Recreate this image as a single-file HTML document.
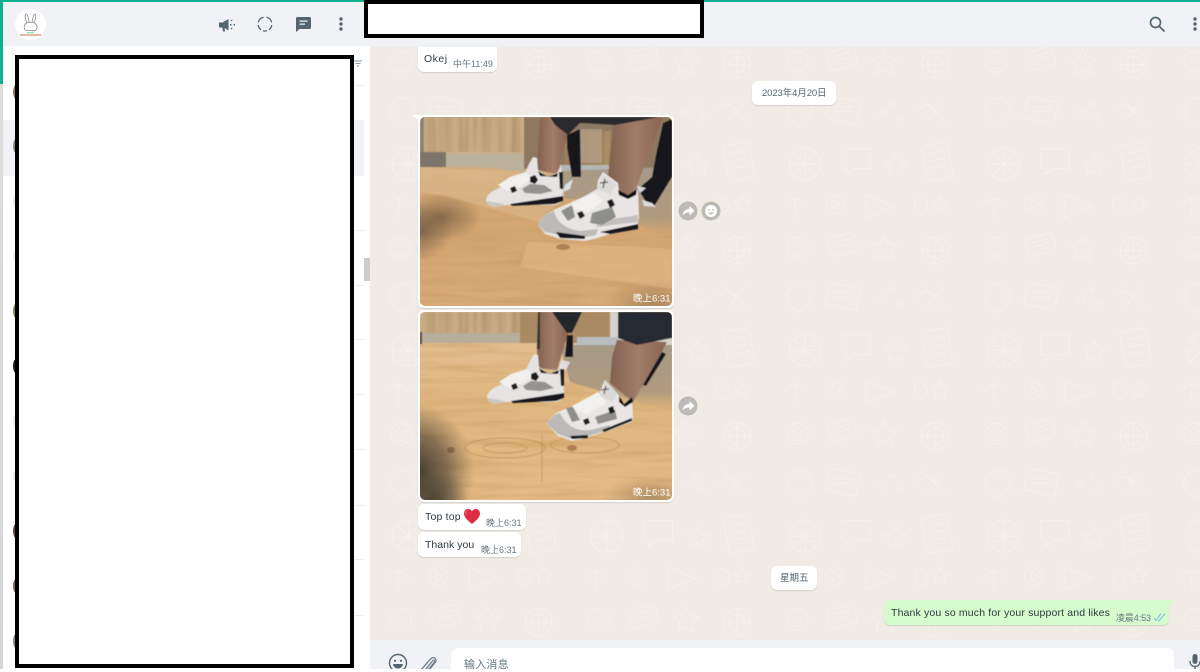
<!DOCTYPE html>
<html><head><meta charset="utf-8">
<style>
*{box-sizing:border-box}
html,body{margin:0;padding:0;width:1200px;height:669px;overflow:hidden;background:#fff;font-family:"Liberation Sans","Noto Sans CJK SC",sans-serif;color:#3b4a54}
.a{position:absolute}
.b{position:absolute;background:#fff;border-radius:6px;box-shadow:0 1px 1px rgba(11,20,26,.12)}
.t{position:absolute;font-size:9px;color:#667781;white-space:nowrap}
.m{position:absolute;font-size:10.5px;color:#2f3a40;white-space:nowrap;letter-spacing:.1px}
.sep{position:absolute;left:354px;width:11px;height:1px;background:#eceef0}
.av{position:absolute;left:13px;width:6px;height:14px;border-radius:50%}
</style></head><body>
<div class="a" style="left:0;top:0;width:3px;height:669px;background:linear-gradient(#dfded9,#d3d7d9)"></div>
<div class="a" style="left:0;top:0;width:3px;height:84px;background:#0fb08e"></div>
<div class="a" style="left:3px;top:2px;width:367px;height:667px;background:#fff"></div>
<div class="a" style="left:3px;top:2px;width:367px;height:44px;background:#f0f2f5"></div>
<div class="a" style="left:3px;top:120px;width:361px;height:56px;background:#f0f2f5"></div>
<div class="a" style="left:364px;top:258px;width:6px;height:23px;background:#ccc"></div>
<div class="sep" style="top:85px;left:3px;width:362px"></div>
<div class="sep" style="top:230px"></div><div class="sep" style="top:285px"></div><div class="sep" style="top:339px"></div><div class="sep" style="top:394px"></div><div class="sep" style="top:449px"></div><div class="sep" style="top:505px"></div><div class="sep" style="top:559px"></div><div class="sep" style="top:615px"></div>
<div class="av" style="top:85px;background:#8d7b6d"></div>
<div class="av" style="top:139px;background:#8a8a8a"></div>
<div class="av" style="top:194px;background:#ececec"></div>
<div class="av" style="top:249px;background:#ececec"></div>
<div class="av" style="top:304px;background:#7b8a65"></div>
<div class="av" style="top:359px;background:#222"></div>
<div class="av" style="top:414px;background:#ececec"></div>
<div class="av" style="top:469px;background:#ececec"></div>
<div class="av" style="top:524px;background:#6a4348"></div>
<div class="av" style="top:579px;background:#7e6560"></div>
<div class="av" style="top:634px;background:#888"></div>

<svg class="a" style="left:353px;top:60px" width="10" height="8" viewBox="0 0 10 8"><path d="M1 1h8M2.500 3.500h5M4 6h2" stroke="#8696a0" stroke-width="1"/></svg>

<!-- logo -->
<svg class="a" style="left:15px;top:9px" width="31" height="31" viewBox="0 0 31 31">
<circle cx="15.500" cy="15.500" r="15.500" fill="#fff"/>
<g fill="none" stroke="#888" stroke-width=".8"><path d="M12 14c-2-3-2.500-8-1-9 1.500 0 2.500 4 3 8M17 13c.5-4 2-8 3-8 1.500 1 .5 6-1.500 9"/><path d="M11.500 14c-3 2-3 6-.5 7.500h9.500c2.500-2 2-5.500-1-7.500-2-1-6-1-8 0z"/></g>
<rect x="12" y="23" width="7" height="1.500" fill="#a8dcc0"/><rect x="5" y="25" width="21" height="2" fill="#e0b8a4"/>
</svg>

<!-- sidebar icons -->
<svg class="a" style="left:218px;top:16px" width="18" height="18" viewBox="0 0 18 18" fill="#54656f"><path d="M1 6.500h3.500L10.500 3v11.500L6.500 12l.6 3.500H5l-.8-4H1z"/><path d="M12 8h1.500v1.500H12zM15.500 8h1.500v1.500h-1.500zM12.500 4.500l1.500-1 .6.900-1.500 1zM12.500 12.500l.6-.9 1.500 1-.6.900z"/></svg>
<svg class="a" style="left:257px;top:16px" width="16" height="16" viewBox="0 0 16 16" fill="none" stroke="#54656f" stroke-width="1.300"><path d="M1.300 6.500A6.900 6.900 0 0 1 6.500 1.300M9.500 1.300a6.900 6.900 0 0 1 5.200 5.200M14.800 9a6.900 6.900 0 0 1-2.900 4.700M10 14.700a7 7 0 0 1-4 0M4.100 13.700A6.900 6.900 0 0 1 1.200 9"/></svg>
<svg class="a" style="left:296px;top:17px" width="15" height="15" viewBox="0 0 15 15" fill="#54656f"><path d="M1.500 0h12A1.500 1.500 0 0 1 15 1.500v9a1.500 1.500 0 0 1-1.500 1.500H3.500L0 15V1.500A1.500 1.500 0 0 1 1.500 0z"/><path d="M3.500 3.500h8v1.300h-8zM3.500 6.500h5.500v1.300H3.500z" fill="#f0f2f5"/></svg>
<svg class="a" style="left:338px;top:16px" width="6" height="16" viewBox="0 0 6 16" fill="#54656f"><circle cx="3" cy="3" r="1.700"/><circle cx="3" cy="8" r="1.700"/><circle cx="3" cy="13" r="1.700"/></svg>

<!-- main chat background -->
<div class="a" style="left:370px;top:47px;width:830px;height:593px;background:#f0ebe4;overflow:hidden">
<svg width="830" height="593" style="position:absolute;left:0;top:0">
<defs><pattern id="d" width="320" height="300" patternUnits="userSpaceOnUse" patternTransform="translate(6 -10) scale(.62)">
<g fill="none" stroke="#f5f1eb" stroke-width="1.500">
<circle cx="40" cy="40" r="17"/><path d="M30 36h6M44 36h6M32 48c5 4 11 4 16 0"/>
<rect x="90" y="20" width="44" height="30" rx="4" transform="rotate(-15 110 35)"/><path d="M98 32l26-7M100 39l26-7"/>
<path d="M180 20l6 13 14 2-10 10 3 14-13-7-13 7 3-14-10-10 14-2z"/>
<circle cx="262" cy="44" r="22"/><circle cx="262" cy="44" r="13"/><path d="M262 22v44M240 44h44"/>
<path d="M25 110c10-15 30-15 36 0s-8 28-18 34c-12-6-26-20-18-34z"/>
<rect x="88" y="100" width="50" height="36" rx="3" transform="rotate(12 113 118)"/><path d="M98 112h30M98 120h30"/>
<circle cx="178" cy="122" r="5"/><circle cx="194" cy="108" r="3"/><circle cx="205" cy="130" r="4"/>
<path d="M240 100l40 38M250 134l24-30M232 118c10-10 20-10 30 0"/>
<circle cx="52" cy="205" r="26"/><path d="M52 179v52M26 205h52M34 187l36 36M70 187l-36 36"/>
<path d="M112 180h46v32h-28l-10 10v-10h-8z"/>
<path d="M198 190l6 10 12 2-8 8 2 12-12-6-11 6 2-12-8-8 12-2z"/>
<rect x="244" y="172" width="42" height="58" rx="5" transform="rotate(-10 265 200)"/><path d="M252 188l26-5M254 200l26-5M256 212l26-5"/>
<path d="M20 272c8-14 26-14 32 0M36 258v36"/><circle cx="100" cy="270" r="14"/><path d="M96 262l12 8-12 8z"/>
<path d="M150 255l46 18-46 18z"/><path d="M230 260c12-6 24 6 18 18s-24 6-18-18zM270 256l4 8 9 1-6 6 1 9-8-4-8 4 1-9-6-6 9-1z"/>
</g></pattern></defs>
<rect width="830" height="593" fill="url(#d)"/>
</svg>
</div>

<!-- headers -->
<div class="a" style="left:370px;top:2px;width:830px;height:45px;background:#f0f2f5"></div>
<svg class="a" style="left:1149px;top:16px" width="16" height="16" viewBox="0 0 16 16" fill="none" stroke="#54656f" stroke-width="1.700"><circle cx="6.500" cy="6.500" r="5"/><path d="M10.500 10.500L15.500 15.500"/></svg>
<svg class="a" style="left:1192px;top:16px" width="6" height="16" viewBox="0 0 6 16" fill="#54656f"><circle cx="3" cy="3" r="1.700"/><circle cx="3" cy="8" r="1.700"/><circle cx="3" cy="13" r="1.700"/></svg>

<!-- Okej -->
<div class="b" style="left:418px;top:47px;width:79px;height:25px;border-radius:0 0 6px 6px"></div>
<div class="m" style="left:424px;top:53px;letter-spacing:.5px">Okej</div>
<div class="t" style="left:453px;top:57px">中午11:49</div>

<!-- date -->
<div class="b" style="left:752px;top:81px;width:84px;height:24px"></div>
<div class="t" style="left:762px;top:85px;color:#54656f;font-size:9.500px;letter-spacing:-.1px">2023年4月20日</div>

<!-- image bubbles -->
<div class="b" style="left:418px;top:115px;width:256px;height:193px"></div>
<svg class="a" style="left:412px;top:115px" width="10" height="8"><path d="M0 0h10v8z" fill="#fff"/></svg>
<div class="b" style="left:418px;top:310px;width:256px;height:192px"></div>

<svg class="a" style="left:420px;top:117px;border-radius:5px" width="252" height="189" viewBox="0 0 252 189">
<defs>
<filter id="bl" x="-5%" y="-5%" width="110%" height="110%"><feGaussianBlur stdDeviation=".6"/></filter>
<filter id="gr" x="0" y="0" width="100%" height="100%"><feTurbulence type="fractalNoise" baseFrequency=".012 .16" numOctaves="3" seed="4"/><feColorMatrix values="0 0 0 0 .55 0 0 0 0 .33 0 0 0 0 .14 1.400 0 0 0 -.52"/></filter>
<filter id="vg" x="0" y="0" width="100%" height="100%"><feTurbulence type="fractalNoise" baseFrequency=".13 .008" numOctaves="2" seed="9"/><feColorMatrix values="0 0 0 0 .42 0 0 0 0 .28 0 0 0 0 .14 1.700 0 0 0 -.6"/></filter>
<linearGradient id="fl" x1="0" y1="0" x2="0" y2="1"><stop offset="0" stop-color="#ddbb90"/><stop offset=".5" stop-color="#d3a470"/><stop offset="1" stop-color="#d9ab76"/></linearGradient>
<linearGradient id="fl2" x1="0" y1="0" x2="0" y2="1"><stop offset="0" stop-color="#e4c298"/><stop offset=".5" stop-color="#e0b67f"/><stop offset="1" stop-color="#e6bb85"/></linearGradient>
<linearGradient id="sk" x1="0" y1="0" x2="1" y2="0"><stop offset="0" stop-color="#82604f"/><stop offset=".5" stop-color="#a17c6a"/><stop offset="1" stop-color="#8a6452"/></linearGradient>
<radialGradient id="tg"><stop offset="0" stop-color="#000" stop-opacity=".2"/><stop offset="1" stop-color="#000" stop-opacity="0"/></radialGradient>
<radialGradient id="sh1"><stop offset="0" stop-color="#4d3d2f" stop-opacity=".85"/><stop offset=".6" stop-color="#6a5440" stop-opacity=".45"/><stop offset="1" stop-color="#6a5440" stop-opacity="0"/></radialGradient>
<radialGradient id="sh2"><stop offset="0" stop-color="#2e2a24" stop-opacity=".9"/><stop offset=".55" stop-color="#4a4136" stop-opacity=".6"/><stop offset="1" stop-color="#5a4836" stop-opacity="0"/></radialGradient>
<linearGradient id="gf" x1="0" y1="0" x2="0" y2="1"><stop offset="0" stop-color="#a69a88"/><stop offset=".7" stop-color="#b09a7e"/><stop offset="1" stop-color="#c9a679" stop-opacity="0"/></linearGradient>
<g id="sL">
<path d="M66 84C66 76 76 72 90 66L105 56L109 47L113 40L117 41L118 53L128 60L138 55L141 48L143 70L143 84L136 88L85 88L74 90L68 88Z" fill="#e6e3e2"/>
<path d="M78 68L90 60L106 55L112 62L100 70L88 74Z" fill="#f2f0ef"/>
<path d="M102 72L110 67L124 68L133 74L120 77L105 76Z" fill="#94938f"/>
<path d="M90 87L143 79L143 84L135 87L92 89Z" fill="#17171a"/>
<path d="M118 54L128 60L138 56L137 60L120 59Z" fill="#111"/>
<path d="M139 55L143 55L143 72L140 72Z" fill="#1c1c1e"/>
<path d="M110 60L115 58L118 63L115 67L110 65Z" fill="#1c1c1e"/><path d="M90 71L95 69L97 74L92 76Z" fill="#1c1c1e"/>
<path d="M66 84L85 87L75 90L68 88Z" fill="#c9c7c4"/>
</g>
</defs>
<rect width="252" height="189" fill="url(#fl)"/>
<rect width="252" height="189" filter="url(#gr)"/>
<g filter="url(#bl)">
<path d="M0 84L45 78L100 82L120 100L110 125L0 120Z" fill="#d8ab75" opacity=".25"/>
<path d="M108 125L252 132V172L100 150Z" fill="#e6bf8e" opacity=".45"/>
<ellipse cx="143" cy="130" rx="7" ry="3" fill="#9a6d42" opacity=".7"/>
<ellipse cx="22" cy="100" rx="40" ry="24" fill="url(#sh1)" opacity=".65"/>
<ellipse cx="0" cy="115" rx="32" ry="28" fill="url(#sh1)" opacity=".7"/>
<path d="M0 50L105 56L145 78L118 105L30 80L0 75Z" fill="#dcbb90" opacity=".55"/>
<rect width="104" height="35" fill="#c9ab84"/>
<rect width="104" height="35" filter="url(#vg)"/>
<rect x="0" y="0" width="4" height="50" fill="#8d8478"/>
<rect x="0" y="35" width="26" height="15" fill="#7d746a"/>
<path d="M26 36H105V55L60 50H26Z" fill="#bcb19b"/>
<rect x="104" y="0" width="148" height="52" fill="#8f7860"/>
<rect x="145" y="14" width="50" height="36" fill="#9c7d5a"/>
<rect x="145" y="14" width="50" height="36" filter="url(#vg)"/>
<rect x="160" y="12" width="22" height="34" fill="#b9aa93" opacity=".6"/>
<path d="M140 48H195V54H140Z" fill="#b5b7b6"/>
<path d="M140 54L252 50V122L218 108L190 82L145 82Z" fill="url(#gf)"/>
<path d="M120 0H130L148 17L137 57L117 53Z" fill="url(#sk)"/>
<path d="M147 18L160 12L161 60L152 60L147 30Z" fill="#17181c"/>
<path d="M193 8L243 0L232 30L213 78L200 78L188 60Z" fill="url(#sk)"/>
<path d="M252 2V60L235 88L228 88L218 72L232 60L236 38L243 6Z" fill="#14151a"/>
<path d="M130 0H240L195 8L160 6L148 18L135 8Z" fill="#2a2c2e"/>
<path d="M145 68L153 62L150 72L143 75Z" fill="#dfe0e3"/><path d="M217 69L226 71L220 76ZM222 83L232 86L236 90L224 89Z" fill="#d9dade"/>
<use href="#sL"/>
<path d="M118 108C120 98 135 92 150 86L165 79L177 72L178 63L183 55L198 66L199 74L208 78L218 72L219 100L217 112L190 117L178 121L165 124L140 122L125 117Z" fill="#e8e5e4"/>
<path d="M118 108C120 100 128 96 134 94C136 104 145 112 160 114L178 112L176 118L165 120L140 118L125 115Z" fill="#bdbbb9"/>
<path d="M176 110L218 105L218 98L180 104Z" fill="#c2c0be"/>
<path d="M136 115L165 119L165 122L140 121Z" fill="#17171a"/>
<path d="M180 115L218 107L218 112L190 117Z" fill="#17171a"/>
<path d="M141 94L152 88L155 100L148 104Z" fill="#8e8e8c"/>
<path d="M172 96L192 90L196 100L182 108L170 106Z" fill="#8e8e8c"/>
<path d="M150 86L175 76L183 84L168 96L154 92Z" fill="#f3f1f0"/>
<path d="M157 96L162 94L165 99L160 102Z" fill="#1a1a1c"/><path d="M187 84L192 82L195 88L190 91Z" fill="#1a1a1c"/>
<path d="M183 58L197 68L190 77L177 72Z" fill="#dad9d7"/>
<path d="M185 62L183 71M180 66L188 65" stroke="#333" stroke-width="1.100" fill="none"/>
<path d="M198 73L208 78L217 72L216 78L208 82L199 78Z" fill="#0e0e0e"/>
</g>
<ellipse cx="232" cy="186" rx="50" ry="22" fill="url(#tg)"/>
<text x="213" y="184.500" font-size="9.500" fill="#fff" font-family="'Liberation Sans','Noto Sans CJK SC',sans-serif">晚上6:31</text>
</svg>

<svg class="a" style="left:420px;top:312px;border-radius:5px" width="252" height="188" viewBox="0 0 252 188">
<defs><filter id="gr2" x="0" y="0" width="100%" height="100%"><feTurbulence type="fractalNoise" baseFrequency=".012 .14" numOctaves="3" seed="21"/><feColorMatrix values="0 0 0 0 .6 0 0 0 0 .36 0 0 0 0 .14 1.300 0 0 0 -.5"/></filter></defs>
<rect width="252" height="188" fill="url(#fl2)"/>
<rect width="252" height="188" filter="url(#gr2)"/>
<g filter="url(#bl)">
<g fill="none" stroke="#b98549" stroke-width=".8" opacity=".7"><ellipse cx="85" cy="136" rx="40" ry="10"/><ellipse cx="85" cy="136" rx="22" ry="5"/><ellipse cx="165" cy="133" rx="34" ry="8"/><path d="M122 122v48"/></g>
<ellipse cx="31" cy="138" rx="4" ry="3" fill="#8d5f38" opacity=".7"/><ellipse cx="152" cy="136" rx="5" ry="3" fill="#a06f44" opacity=".75"/>
<ellipse cx="-4" cy="160" rx="58" ry="68" fill="url(#sh2)"/>
<ellipse cx="14" cy="190" rx="34" ry="34" fill="url(#sh2)" opacity=".7"/>
<rect width="125" height="21" fill="#c9ab84"/>
<rect width="125" height="21" filter="url(#vg)"/>
<rect y="21" width="125" height="10" fill="#b8ad9b"/>
<rect x="0" y="20" width="2" height="12" fill="#5a4a34"/>
<rect x="100" y="0" width="152" height="31" fill="#a98a64"/>
<rect x="190" y="0" width="62" height="34" fill="#d6d3cd"/>
<path d="M157 25H200V35H157Z" fill="#b9bdc0"/>
<path d="M140 33L252 33V100L212 88L150 70Z" fill="url(#gf)"/>
<path d="M120 0H132L148 21L137 58L118 56L117 37Z" fill="url(#sk)"/>
<path d="M132 0H162L152 21L147 21Z" fill="#24262a"/>
<path d="M147 23L153 23L153 45L145 45Z" fill="#14151a"/>
<path d="M118 0H120V37H117Z" fill="#3b322b"/>
<path d="M141 48L150 50L146 58L139 56Z" fill="#ddd"/>
<path d="M197 28L247 30L232 58L213 90L190 71L192 45Z" fill="url(#sk)"/>
<path d="M242 40L223 73L226 74L246 42Z" fill="#14151a"/>
<path d="M198 0H252V26L217 33L198 26Z" fill="#262a31"/>
<use href="#sL" x="1" y="2"/>
<path d="M127 112C130 103 140 98 152 95L165 90L178 85L183 72L185 68L198 82L203 92L212 85L213 105L212 110L190 118L165 126L152 129L138 124Z" fill="#e9e6e5"/>
<path d="M127 112C130 105 135 102 140 101C145 112 155 120 170 118L190 113L188 118L165 125L152 127L138 122Z" fill="#bcbab8"/>
<path d="M150 124L168 123L168 126L152 127Z" fill="#17171a"/>
<path d="M182 118L212 106L212 109L184 120Z" fill="#17171a"/>
<path d="M146 96L153 95L160 108L152 110Z" fill="#8e8e8c"/>
<path d="M175 105L195 98L197 107L178 112Z" fill="#8e8e8c"/>
<path d="M152 94L178 80L187 90L168 102L158 100Z" fill="#f3f1f0"/>
<path d="M163 108L168 106L170 111L165 113Z" fill="#1a1a1c"/><path d="M188 96L193 94L195 100L190 102Z" fill="#1a1a1c"/>
<path d="M185 70L198 82L192 90L180 84Z" fill="#dad9d7"/>
<path d="M186 74L184 82M181 78L189 77" stroke="#333" stroke-width="1" fill="none"/>
<path d="M199 84L204 92L212 85L213 90L205 95L199 90Z" fill="#0e0e0e"/>
</g>
<ellipse cx="232" cy="185" rx="50" ry="22" fill="url(#tg)"/>
<text x="213" y="183.500" font-size="9.500" fill="#fff" font-family="'Liberation Sans','Noto Sans CJK SC',sans-serif">晚上6:31</text>
</svg>

<!-- action buttons -->
<svg class="a" style="left:678px;top:201px" width="44" height="20" viewBox="0 0 44 20">
<circle cx="10" cy="10" r="9.500" fill="#bcbab6"/><path d="M4.500 14.500c.5-4 3-6.500 7-6.800V5l5 4.700-5 4.800v-3c-3 0-5 .8-7 3z" fill="#fff"/>
<circle cx="33" cy="10" r="9.500" fill="#bcbab6"/><circle cx="33" cy="10" r="6" fill="#fff"/><circle cx="31" cy="8.800" r=".9" fill="#bcbab6"/><circle cx="35" cy="8.800" r=".9" fill="#bcbab6"/><path d="M30 11.500c1.500 2.300 4.500 2.300 6 0z" fill="#bcbab6"/>
</svg>
<svg class="a" style="left:678px;top:396px" width="20" height="20" viewBox="0 0 20 20">
<circle cx="10" cy="10" r="9.500" fill="#bcbab6"/><path d="M4.500 14.500c.5-4 3-6.500 7-6.800V5l5 4.700-5 4.800v-3c-3 0-5 .8-7 3z" fill="#fff"/>
</svg>

<!-- text bubbles -->
<div class="b" style="left:418px;top:504px;width:108px;height:26px"></div>
<div class="m" style="left:425px;top:511px;letter-spacing:.2px">Top top</div>
<svg class="a" style="left:464px;top:509px" width="16" height="15" viewBox="0 0 16 15"><path d="M8 15C3 11 0 8 0 4.500 0 1.500 2.200 0 4.200 0 6 0 7.300 1 8 2.300 8.700 1 10 0 11.800 0 13.800 0 16 1.500 16 4.500 16 8 13 11 8 15z" fill="#dd2e44"/><path d="M3 2.500c-1 .5-1.500 1.500-1.300 2.700" stroke="#f27c88" fill="none"/></svg>
<div class="t" style="left:486px;top:516px">晚上6:31</div>
<div class="b" style="left:418px;top:532px;width:103px;height:25px"></div>
<div class="m" style="left:425px;top:539px;letter-spacing:.02px">Thank you</div>
<div class="t" style="left:481px;top:543px">晚上6:31</div>

<div class="b" style="left:771px;top:566px;width:46px;height:24px"></div>
<div class="t" style="left:780px;top:570px;color:#54656f;font-size:9.500px">星期五</div>

<!-- outgoing -->
<div class="b" style="left:884px;top:600px;width:285px;height:25px;background:#d6fbcd;border-radius:6px 0 6px 6px"></div>
<svg class="a" style="left:1168px;top:600px" width="7" height="7"><path d="M0 0h7L0 7z" fill="#d6fbcd"/></svg>
<div class="m" style="left:891px;top:607px;letter-spacing:.15px">Thank you so much for your support and likes</div>
<div class="t" style="left:1116px;top:611px;letter-spacing:-.1px">凌晨4:53</div>
<svg class="a" style="left:1153px;top:612px" width="13" height="10" viewBox="0 0 13 10" fill="none" stroke="#74bbd8" stroke-width=".9"><path d="M1 6l2 2.500L8 1.500M5 8l1 .8L12 1.500"/></svg>

<!-- footer -->
<div class="a" style="left:370px;top:640px;width:830px;height:29px;background:#f0f2f5"></div>
<svg class="a" style="left:388px;top:653px" width="20" height="16" viewBox="0 0 20 16" fill="none" stroke="#54656f" stroke-width="1.400"><circle cx="10" cy="10" r="8.500"/><circle cx="7" cy="7.800" r="1.100" fill="#54656f" stroke="none"/><circle cx="13" cy="7.800" r="1.100" fill="#54656f" stroke="none"/><path d="M5 11h10c-.5 3-2.500 4.500-5 4.500S5.500 14 5 11z" fill="#54656f" stroke="none"/></svg>
<svg class="a" style="left:420px;top:655px" width="18" height="14" viewBox="0 0 18 14" fill="none" stroke="#6d7c86" stroke-width="1.300"><path d="M1 15L10.500 4c2.500-3 7-.5 5 3L9 15"/><path d="M5 15l7.500-9c1.200-1.500 3-.2 2 1.200L8 15"/></svg>
<div class="a" style="left:451px;top:648px;width:723px;height:21px;background:#fff;border-radius:7px 7px 0 0"></div>
<div class="a" style="left:464px;top:656px;font-size:11px;color:#667781;letter-spacing:.2px;white-space:nowrap">输入消息</div>
<svg class="a" style="left:1189px;top:654px" width="12" height="15" viewBox="0 0 12 15" fill="#54656f"><rect x="3.500" y="0" width="5" height="10" rx="2.500"/><path d="M1 7c0 3.500 2 5.500 5 5.500S11 10.500 11 7" fill="none" stroke="#54656f" stroke-width="1.300"/><rect x="5.400" y="12" width="1.300" height="3"/></svg>

<!-- redaction boxes -->
<div class="a" style="left:364px;top:0;width:340px;height:38px;background:#fff;border:4px solid #000"></div>
<div class="a" style="left:0;top:0;width:364px;height:2px;background:#0fb08e"></div>
<div class="a" style="left:704px;top:0;width:496px;height:2px;background:#0fb08e"></div>
<div class="a" style="left:15px;top:55px;width:339px;height:613px;background:#fff;border:4px solid #000"></div>
</body></html>
